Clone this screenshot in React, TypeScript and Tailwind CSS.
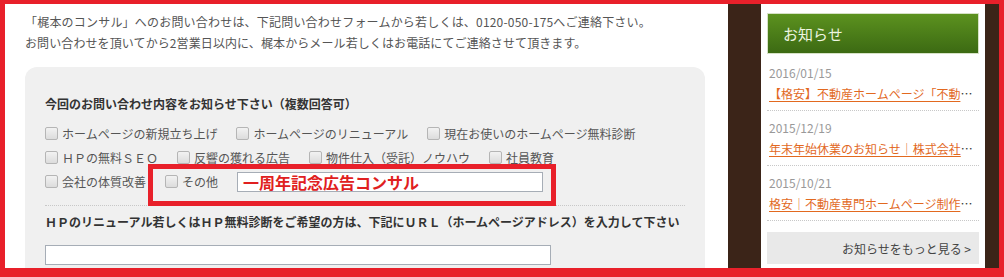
import React from 'react';

const font = "font-['Noto_Sans_CJK_JP','Noto_Sans',sans-serif]";

function Check({ label }: { label: string }) {
  return (
    <label className="flex items-center gap-[4px]">
      <span className="block w-[13px] h-[13px] rounded-[2px] border border-[#b5b5b5] bg-gradient-to-b from-[#f2f2f2] to-[#dcdcdc]" />
      <span>{label}</span>
    </label>
  );
}

const news = [
  { date: '2016/01/15', title: '【格安】不動産ホームページ「不動産専門ホームページ制作」' },
  { date: '2015/12/19', title: '年末年始休業のお知らせ｜株式会社梶本' },
  { date: '2015/10/21', title: '格安｜不動産専門ホームページ制作のご案内' },
];

export default function App() {
  return (
    <div className={`relative w-[1004px] h-[277px] overflow-hidden flex bg-white text-[12px] leading-[21px] text-[#555] ${font}`}>
      {/* main column */}
      <div className="w-[728px] shrink-0 pl-[25px] pt-[11px]">
        <p className="tracking-[0.2px]">「梶本のコンサル」へのお問い合わせは、下記問い合わせフォームから若しくは、0120-050-175へご連絡下さい。</p>
        <p className="tracking-[0.1px]">お問い合わせを頂いてから2営業日以内に、梶本からメール若しくはお電話にてご連絡させて頂きます。</p>

        <div className="mt-[14px] w-[680px] h-[260px] rounded-[12px] bg-[#f0f0f0] px-[20px] pt-[26px]">
          <p className="font-bold text-[#333]">今回のお問い合わせ内容をお知らせ下さい（複数回答可）</p>
          <div className="mt-[7px] flex flex-col">
            <div className="h-[24px] flex items-center gap-[19px]">
              <Check label="ホームページの新規立ち上げ" />
              <Check label="ホームページのリニューアル" />
              <Check label="現在お使いのホームページ無料診断" />
            </div>
            <div className="h-[24px] flex items-center gap-[19px]">
              <Check label="ＨＰの無料ＳＥＯ" />
              <Check label="反響の獲れる広告" />
              <Check label="物件仕入（受託）ノウハウ" />
              <Check label="社員教育" />
            </div>
            <div className="h-[25px] flex items-center gap-[19px]">
              <Check label="会社の体質改善" />
              <Check label="その他" />
              <div className="w-[306px] h-[20px] border border-[#a6adb6] bg-white pl-[5px] flex items-center">
                <span className="text-[16px] leading-[18px] font-bold text-[#e02020]">一周年記念広告コンサル</span>
              </div>
            </div>
          </div>
          <div className="mt-[11px] border-t border-dotted border-[#c8c8c8]" />
          <p className="pt-[5px] font-bold text-[#333]">ＨＰのリニューアル若しくはＨＰ無料診断をご希望の方は、下記にＵＲＬ（ホームページアドレス）を入力して下さい</p>
          <div className="mt-[13px] w-[506px] h-[20px] border border-[#a6adb6] bg-white" />
        </div>
      </div>

      {/* sidebar */}
      <div className="flex-1 bg-[#3b2418] pl-[33px]">
        <div className="w-[224px] h-full bg-white px-[6px] pt-[13px]">
          <div className="h-[41px] border border-[#d6e2c6] bg-gradient-to-b from-[#5c921f] to-[#3c6a13] flex items-center pl-[15px]">
            <span className="text-[15px] text-[#eef6e2]">お知らせ</span>
          </div>
          <div className="mt-[8px]">
            {news.map((n) => (
              <div key={n.date} className="px-[2px] pb-[6px] pt-[6px] first:pt-0 border-b border-dotted border-[#c8c8c8]">
                <p className="text-[#999]">{n.date}</p>
                <p className="truncate text-[#333]">
                  <a className="text-[#e2691f] underline underline-offset-2">{n.title}</a>
                </p>
              </div>
            ))}
          </div>
          <div className="mt-[11px] h-[32px] bg-[#e9e9e9] flex items-center justify-end pr-[8px] text-[#444]">
            お知らせをもっと見る &gt;
          </div>
        </div>
      </div>

      {/* annotation overlays */}
      <div className="absolute left-[148px] top-[164px] w-[408px] h-[42px] border-[5px] border-[#e8202a] pointer-events-none" />
      <div className="absolute inset-0 border-l-[5px] border-t-[4px] border-r-[5px] border-b-[9px] border-[#e8202a] pointer-events-none" />
    </div>
  );
}
